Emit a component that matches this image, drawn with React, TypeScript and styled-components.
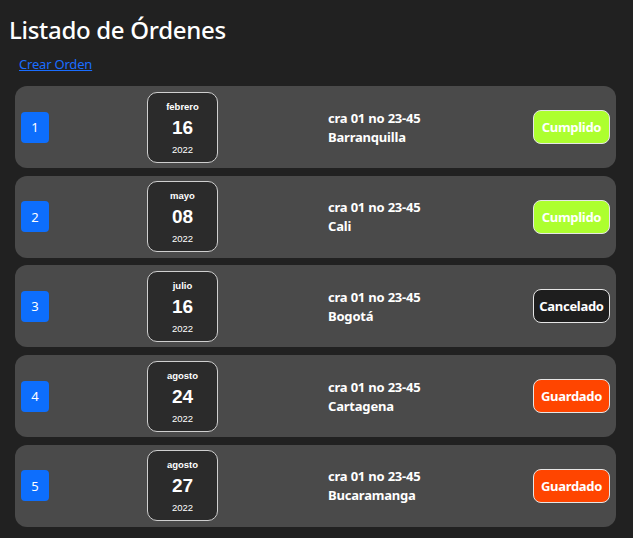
import React from "react";
import styled, { createGlobalStyle } from "styled-components";

const Global = createGlobalStyle`
  html, body { margin: 0; padding: 0; background: #212121; }
  body { font-family: "Segoe UI", "Noto Sans", sans-serif; color: #fff; }
`;

const Page = styled.div`
  padding: 14px 17px 0 15px;
  display: flex;
  flex-direction: column;
`;

const Title = styled.h1`
  margin: 0 0 0 -6px;
  font-size: 24px;
  font-weight: 500;
  line-height: 32px;
  letter-spacing: -0.3px;
  color: #fff;
`;

const CreateLink = styled.a`
  margin: 10px 0 0 4px;
  font-size: 13px;
  line-height: 16px;
  letter-spacing: -0.2px;
  color: #1a6dff;
  text-decoration: underline;
  cursor: pointer;
  align-self: flex-start;
`;

const List = styled.div`
  margin-top: 14px;
  display: flex;
  flex-direction: column;
  gap: 7.7px;
`;

const Card = styled.div`
  height: 82px;
  background: #4a4a4a;
  border-radius: 12px;
  display: grid;
  grid-template-columns: 126px 181px 1fr auto;
  align-items: center;
  padding: 0 6px;
`;

const Num = styled.div`
  width: 28px;
  height: 31px;
  border-radius: 4px;
  background: #0d6efd;
  color: #fff;
  font-size: 13px;
  display: flex;
  align-items: center;
  justify-content: center;
`;

const DateBox = styled.div`
  width: 69px;
  height: 69px;
  border: 1px solid #cfcfcf;
  border-radius: 10px;
  background: #2b2b2b;
  display: flex;
  flex-direction: column;
  align-items: center;
  font-family: "Liberation Sans", Arial, sans-serif;
`;

const Month = styled.div`
  margin-top: 8px;
  font-size: 9.5px;
  font-weight: 700;
  line-height: 12px;
`;

const Day = styled.div`
  margin-top: 4px;
  font-size: 19px;
  font-weight: 700;
  line-height: 22px;
`;

const Year = styled.div`
  margin-top: 5px;
  font-size: 9.5px;
  line-height: 12px;
`;

const Address = styled.div`
  margin-top: 1px;
  font-size: 13px;
  font-weight: 700;
  line-height: 19px;
  letter-spacing: -0.2px;
`;

const Status = styled.div<{ $bg: string }>`
  width: 75px;
  height: 32px;
  border: 1px solid #e6e6e6;
  border-radius: 8px;
  background: ${(p) => p.$bg};
  color: #fff;
  font-size: 13px;
  font-weight: 700;
  letter-spacing: -0.3px;
  display: flex;
  align-items: center;
  justify-content: center;
`;

const orders = [
  { id: 1, month: "febrero", day: "16", year: "2022", city: "Barranquilla", status: "Cumplido" },
  { id: 2, month: "mayo", day: "08", year: "2022", city: "Cali", status: "Cumplido" },
  { id: 3, month: "julio", day: "16", year: "2022", city: "Bogotá", status: "Cancelado" },
  { id: 4, month: "agosto", day: "24", year: "2022", city: "Cartagena", status: "Guardado" },
  { id: 5, month: "agosto", day: "27", year: "2022", city: "Bucaramanga", status: "Guardado" },
];

const statusColor: Record<string, string> = {
  Cumplido: "#adff2f",
  Cancelado: "#1e1e1e",
  Guardado: "#ff4500",
};

export default function App() {
  return (
    <>
      <Global />
      <Page>
        <Title>Listado de Órdenes</Title>
        <CreateLink>Crear Orden</CreateLink>
        <List>
          {orders.map((o) => (
            <Card key={o.id}>
              <Num>{o.id}</Num>
              <DateBox>
                <Month>{o.month}</Month>
                <Day>{o.day}</Day>
                <Year>{o.year}</Year>
              </DateBox>
              <Address>
                <div>cra 01 no 23-45</div>
                <div>{o.city}</div>
              </Address>
              <Status $bg={statusColor[o.status]}>{o.status}</Status>
            </Card>
          ))}
        </List>
      </Page>
    </>
  );
}
